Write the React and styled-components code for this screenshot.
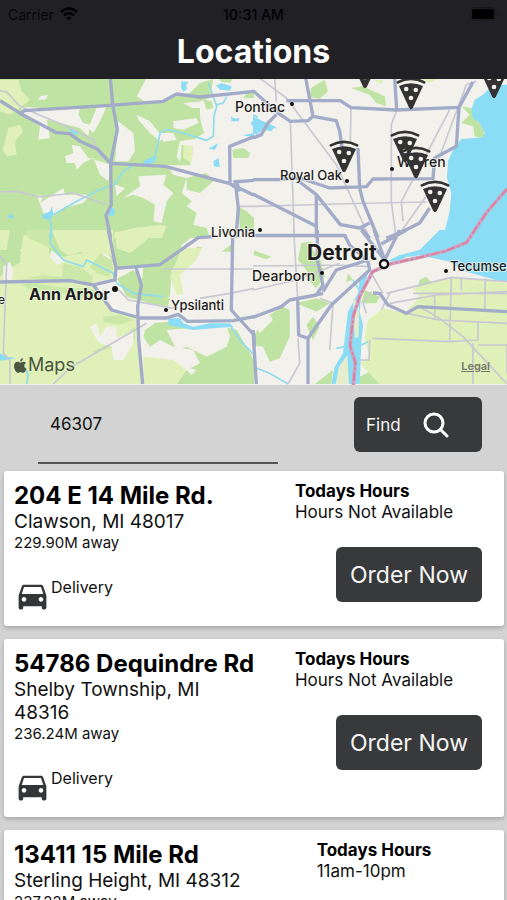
import styled, { createGlobalStyle } from 'styled-components';
import { MdDirectionsCar } from 'react-icons/md';

// The map is drawn from four tiles; each tile keeps its own coordinates.
const tiles = [
  {
    at: 'translate(0 -3)',
    forest: [
      'M0 0H640L630 60L600 70L600 120L612 165L585 182L540 190L530 235L545 262L500 262L520 290L560 300L545 345L575 370L560 385L590 405L580 440L620 450L630 480H0Z',
      'M560 300L620 285L640 310L600 345L560 335ZM545 200L575 205L570 262L540 262Z',
      'M610 65L635 70L640 90L620 95ZM697 215L730 210L750 225L745 240L700 240ZM655 0H700L690 14L665 12ZM730 60H762V45L740 45Z',
      'M715 385L740 400L762 420V470L720 455Z'
    ],
    field: [
      'M0 5H55L65 40L90 65L60 90L30 110L0 100ZM25 150L60 140L70 160L45 190L50 230L20 235L8 215Z',
      'M345 465L400 450L480 440L500 445L485 480H340ZM550 200L580 205L575 255L550 240Z'
    ],
    land: [
      'M62 88L90 88L180 95L240 90L235 110L250 135L270 140L265 175L240 150L180 135L140 125L150 180L115 185L120 145L80 120Z',
      'M120 55L145 50L135 65L115 65ZM195 235L220 225L215 200L240 205L265 240L300 250L330 260L325 310L300 290L280 240L250 255L230 275L225 255L200 255ZM290 90L320 85L300 130L280 165L265 150ZM355 130L400 165L405 220L385 250L345 250ZM410 110L450 130L490 180L480 190L450 165L415 125Z',
      'M410 55L440 0H650L600 15L570 45L530 55L495 70L440 75ZM520 130L590 120L595 135L550 155L520 150ZM480 165L520 165L530 185L490 192ZM550 75L610 70L600 90L575 90ZM415 295L500 290L490 320L520 345L500 370L485 435L460 430L465 380L430 360L400 350L370 360L420 325ZM345 320L375 330L350 355ZM110 350L130 355L120 375L190 330L195 350L270 350L250 375L190 390L160 415L130 405Z'
    ],
    water: [
      'M545 10L565 12L558 22L562 32L550 42L543 28ZM648 22L665 16L695 25L690 38L660 35ZM435 245L470 235L465 250L450 260L432 257ZM692 115L705 122L718 120L716 130L695 130ZM640 250L655 240L660 268L642 265ZM625 212L655 195L645 215ZM330 385L346 395L340 415L327 415ZM125 412L150 400L156 385L160 410L150 425L130 422ZM22 418L32 406L45 422ZM205 148L235 165L230 172L210 160ZM728 172L762 165V178ZM752 135L762 125V150Z'
    ],
    streams: [
      'M430 255L465 235L480 165L500 155L550 165L620 187L640 175L642 115L650 85L625 15M160 410L230 370L300 335L345 318L370 280L400 262M150 425L155 450L148 480M650 80L670 75L680 55'
    ],
    minor: [
      'M0 38L20 42L60 85L120 112L200 145L280 185L300 230L330 255M0 342L50 340L120 357L220 345L320 380M720 385H762'
    ],
    roads: [
      'M331 0L338 80L352 155L332 255L334 380L318 412L332 480M0 68L62 107L170 164L210 167L240 190L292 213L332 256L495 265L690 317L762 352M62 107L72 98L330 82L490 70L530 48L600 57L762 40M690 317L689 205L762 176M690 317L708 330L715 390L708 480M700 312L762 307M710 313L720 340'
    ]
  },
  {
    at: 'translate(759 -3)',
    forest: [
      'M175 30L215 5L225 40L200 62L170 58ZM295 30L330 25L395 55L400 85L370 75L350 50ZM625 85L655 90L660 110L690 150L695 182L665 175L660 145L625 135L650 110Z'
    ],
    field: ['M500 0H560L530 14ZM360 5H390L385 18Z'],
    land: [],
    water: [
      'M762 20H720L690 50L665 65L655 95L660 120L680 135L695 165L690 178L625 183L600 215L585 250L582 300L595 345L590 400L570 480H762Z',
      'M0 115L30 130L65 145L55 160L30 155L10 170L0 165Z'
    ],
    streams: ['M0 110L15 118M40 140L68 150'],
    minor: [
      'M20 0L100 60L250 260L350 480M294 90L292 190M112 130L124 480M0 385L250 378L520 372M590 95L530 210L445 370L450 430M670 10L640 20L555 250M65 0L70 70M432 94L415 140L415 370L428 470M445 460L530 340'
    ],
    roads: [
      'M158 0L180 115L165 128L112 130L75 105L0 38M100 68H262L294 89L430 96L618 88L660 12M425 0L431 94M180 115L250 128L260 160L268 215M315 210L320 330M0 305H80L140 300L230 330L340 326L360 303L540 302L545 240L610 205L618 88M140 312L190 350L262 440L320 450L350 435M190 350V480M0 348L190 445M320 330L330 370L375 480M530 390L500 435L440 465L400 480M70 110L45 135L25 170L0 180M0 473H280M325 450L350 480'
    ]
  },
  {
    at: 'translate(0 453)',
    forest: [
      'M0 0H600L545 45L535 100L515 120L510 200L475 205L470 235L420 230L430 110L345 115L330 80L300 55L290 90L270 110L190 80L150 75L80 45L60 60L75 90L40 110L0 140ZM65 165L100 155L160 170L280 175L300 205L250 200L210 190L100 185Z',
      'M345 150L400 120L470 190L510 205L500 245L430 240L370 205ZM440 280L520 275L590 300L670 290L710 300L762 390V462H530L560 420L600 400L580 360L520 350L480 330L450 350L430 320ZM275 365L350 330L410 290L405 330L350 350L290 365ZM310 260L360 255L400 270L360 285L310 275Z',
      'M665 65L730 15L755 20L740 90L710 100L700 65ZM590 50L625 55L620 75L590 65ZM530 5L545 0V25Z'
    ],
    field: [
      'M0 140L40 110L75 90L190 80L300 60L345 115V165L410 270V462H0Z',
      'M70 15L140 20L150 75L190 110L185 140L75 145L60 90ZM155 0H340L340 80L300 65L280 85L240 65L210 80L180 60ZM345 5H460L440 30L390 70L350 55ZM545 55L610 55L570 120L560 190L530 195L510 140Z',
      'M400 300L420 350L425 462H390ZM430 380L520 390L560 420L530 462H430ZM0 0H30L20 60L0 60Z'
    ],
    // woods standing inside the fields west of Ann Arbor
    woods: [
      'M65 165L100 155L160 170L280 178L300 205L250 200L210 190L100 185ZM75 145L130 135L185 142L190 100L240 110L280 140L275 160L190 150ZM270 110L300 70L335 90L340 115L325 140L290 130ZM310 260L360 255L400 270L360 285L310 275ZM275 365L350 330L405 290L405 325L350 350L290 365ZM80 0H150L165 60L120 40L85 25Z'
    ],
    land: [
      'M285 155L350 145L380 200L470 225L530 235L620 200L690 180L762 190V270L690 265L560 270L420 262L330 240ZM610 45L660 60L690 95L670 140L610 190L550 195L540 135L590 90ZM705 0H762V190L690 170ZM270 290L290 280L300 320L320 290L350 290L350 325L400 300L400 340L370 390L340 390L335 350L300 340L285 320ZM500 300L680 285L690 320L680 350L620 380L560 350L530 360ZM155 60L195 95L170 105L150 80ZM10 110L30 95L40 125L35 150L10 150ZM550 410L590 420L575 435ZM430 265L465 280L435 300Z'
    ],
    water: ['M505 265L540 265L550 280L580 290L630 280L690 280L700 290L640 295L580 300L530 290L505 285ZM0 370L20 380L50 385L0 392Z'],
    streams: ['M155 0L150 40L190 90L250 110L260 90L340 130L350 160L400 190L490 200M690 285L720 330L762 375M65 395L85 435L80 462'],
    minor: ['M0 80L20 100L10 370L30 390V462M490 117H762M355 178L385 210L520 235M600 205L690 190L762 175M160 462L215 410L440 280'],
    roads: [
      'M325 0L348 115L345 150L280 165L210 152L0 156M348 115L480 104L595 23L640 20M408 113L424 165L413 230L416 330L428 462M280 165L335 240L420 264H500L535 253L563 274L700 272L762 260M698 20L694 240L762 315V350'
    ]
  },
  {
    at: 'translate(759 453)',
    forest: [
      'M0 60L55 80L40 88L0 75ZM145 38L175 35L180 60L205 95L215 140L190 175L170 155L160 120L135 90ZM40 260L90 230L110 240L110 320L80 385L50 395L30 350L0 345V320L20 290ZM130 220L190 205L230 220L190 245ZM160 285L180 260L200 290L180 330ZM335 180L380 200L370 220L325 220ZM500 150L520 140L560 190L490 185ZM185 462L240 420L235 462ZM320 440L360 420L380 462H320ZM285 130L300 150L280 155Z'
    ],
    field: [
      'M345 270L390 235L455 250L500 200L480 175L600 140L762 160V462H380L320 400L350 380L335 325ZM300 200L318 240L315 320L300 290Z'
    ],
    land: ['M40 240L60 270L20 310L15 300Z'],
    water: [
      'M560 0H762V155L730 150L640 125L590 95L500 75L430 92L400 95L440 75L500 60Z',
      'M345 130L325 195L320 245L330 285L325 340L320 462H235L245 410L270 370L285 245L315 190L320 150Z'
    ],
    // long islands in the Detroit river
    islands: ['M300 200L318 230L317 320L306 325L302 270ZM283 375L288 462H248L258 410ZM440 92L460 80L500 78L490 92Z'],
    streams: ['M325 190L300 150M0 410L50 430L105 462M325 345L345 335M250 355L275 350'],
    minor: [
      'M122 0L134 205M0 108L250 105L350 110M0 180L130 150L260 100M400 190L595 142L762 155M480 190H762M410 220L550 195L762 185M595 142L590 335M360 325L590 335L675 330V275M350 330L348 390H320M460 250L560 270L762 280M545 190V270M625 142V180M697 145L695 245M675 345H762V430M660 340V462M240 225L230 360M135 325L140 400L105 462M200 205L240 220M355 130L390 190M340 250L330 220L355 185M385 240L410 190',
      'M500 230L560 265L630 320L762 462'
    ],
    roads: [
      'M0 16H275L290 45L345 95L350 120L235 225L165 325V462M193 0V90L210 165L190 195L110 210L85 230L0 262M134 210L137 315L165 325M325 0L395 90M363 0L395 90L440 0M385 42L460 0M210 190L190 195M360 189L380 190L405 225L460 250L495 230L762 245M0 300L10 462M210 185L250 120L345 90'
    ]
  }
];

const layers = [
  { name: 'forest', fill: '#bfe3a2' },
  { name: 'field', fill: '#dff0b8' },
  { name: 'woods', fill: '#cbe8a8' },
  { name: 'land', fill: '#f3f1ec' },
  { name: 'water', fill: '#8bdcf5' },
  { name: 'islands', fill: '#e6edcf' },
  { name: 'streams', stroke: '#8fdcec', width: 5 },
  { name: 'minor', stroke: '#c8c8d2', width: 5 },
  { name: 'roads', stroke: '#a2acc8', width: 10 }
];

const border =
  'M1521 330L1460 400L1400 490L1340 515L1260 535L1170 555L1118 578L1080 650L1060 710L1050 800L1066 850L1060 918';

const towns = [
  { name: 'Pontiac', x: 235, y: 33, size: 14, weight: 500, dot: [292, 25] },
  { name: 'Royal Oak', x: 280, y: 101, size: 13, weight: 500, dot: [347, 102] },
  { name: 'Warren', x: 397, y: 88, size: 14, weight: 500, dot: [392, 90] },
  { name: 'Livonia', x: 211, y: 158, size: 13, weight: 500, dot: [260, 151] },
  { name: 'Detroit', x: 307, y: 181, size: 21, weight: 700 },
  { name: 'Dearborn', x: 252, y: 202, size: 14, weight: 500, dot: [322, 194] },
  { name: 'Tecumse', x: 450, y: 192, size: 13, weight: 500, dot: [446, 192] },
  { name: 'Ann Arbor', x: 29, y: 221, size: 16, weight: 700, dot: [115, 210], big: true },
  { name: 'Ypsilanti', x: 171, y: 231, size: 13, weight: 500, dot: [166, 231] },
  { name: 'e', x: -2, y: 225, size: 12, weight: 400 }
];

const pins = [
  [365, -22],
  [411, -1],
  [494, -12],
  [344, 62],
  [405, 52],
  [416, 68],
  [435, 102]
];

const stores = [
  { street: '204 E 14 Mile Rd.', city: 'Clawson, MI 48017', distance: '229.90M', hours: 'Hours Not Available' },
  { street: '54786 Dequindre Rd', city: 'Shelby Township, MI 48316', distance: '236.24M', hours: 'Hours Not Available' },
  { street: '13411 15 Mile Rd', city: 'Sterling Height, MI 48312', distance: '237.22M', hours: '11am-10pm' }
];

function PizzaPin({ x, y }) {
  return (
    <g transform={`translate(${x} ${y})`}>
      <path d='M-13.2 4.4Q0 -2.6 13.2 4.4' fill='none' stroke='#333' strokeWidth='2.6' strokeLinecap='round' />
      <path d='M-12 8Q0 2.6 12 8L2 29.600Q0 33 -2 29.600Z' fill='#333' />
      <circle cx='-4.8' cy='11' r='2.3' fill='#f3f1ec' />
      <circle cx='4.8' cy='12' r='2.3' fill='#f3f1ec' />
      <circle cx='0' cy='20' r='2.3' fill='#f3f1ec' />
    </g>
  );
}

function StoreMap() {
  return (
    <MapArea>
      <svg viewBox='0 0 507 306' role='img' aria-label='Map of store locations'>
        <rect width='507' height='306' fill='#f3f1ec' />
        <g transform='scale(0.33333)' strokeLinejoin='round'>
          {layers.map(layer => (
            <g
              key={layer.name}
              fill={layer.fill || 'none'}
              stroke={layer.stroke}
              strokeWidth={layer.width}>
              {tiles.map(tile => (
                <g key={tile.at} transform={tile.at}>
                  {(tile[layer.name] || []).map(d => (
                    <path key={d} d={d} />
                  ))}
                </g>
              ))}
            </g>
          ))}
          <path d={border} fill='none' stroke='#c9a5c9' strokeWidth='11' />
          <path d={border} fill='none' stroke='#e5798f' strokeWidth='5' strokeDasharray='26 7 8 7' />
        </g>
        {towns.map(town => (
          <g key={town.name}>
            {town.dot && <circle cx={town.dot[0]} cy={town.dot[1]} r={town.big ? 3 : 2} fill='#111' />}
            <TownName x={town.x} y={town.y} fontSize={town.size} fontWeight={town.weight}>
              {town.name}
            </TownName>
          </g>
        ))}
        <circle cx='384' cy='185' r='4' fill='#fff' stroke='#111' strokeWidth='2.400' />
        {pins.map(([x, y]) => (
          <PizzaPin key={`${x} ${y}`} x={x} y={y} />
        ))}
      </svg>
      <MapBrand>
        <svg width='13' height='15' viewBox='0 0 26 30' fill='currentColor' aria-hidden='true'>
          <path d='M18 0C18.300 3.500 15.500 7 12.300 7C12 3.700 15 .4 18 0ZM24 10C18.500 13 19.600 19.500 25 21.500C23.500 25.500 21 29.500 18.300 29.500C16.300 29.500 15.700 28.300 13.300 28.300C10.800 28.300 10 29.500 8.200 29.500C4.500 29.500 0 22 0 16.300C0 10.600 3.600 7.700 7.200 7.700C9.600 7.700 11.500 9.200 13 9.200C14.400 9.200 16.600 7.500 19.400 7.600C20.500 7.700 22.700 8.200 24 10Z' />
        </svg>
        Maps
      </MapBrand>
      <Legal href='#legal'>Legal</Legal>
    </MapArea>
  );
}

function StoreCard({ store }) {
  return (
    <Card>
      <div>
        <Street>{store.street}</Street>
        <City>{store.city}</City>
        <Distance>{store.distance} away</Distance>
        <Delivery>
          <MdDirectionsCar size={37} color='#333537' />
          <span>Delivery</span>
        </Delivery>
      </div>
      <Side>
        <Hours>
          <strong>Todays Hours</strong>
          <span>{store.hours}</span>
        </Hours>
        <OrderButton>Order Now</OrderButton>
      </Side>
    </Card>
  );
}

function App() {
  return (
    <Page>
      <GlobalStyle />
      <Header>
        <StatusBar>
          <Carrier>
            Carrier
            <svg width='18' height='14' viewBox='0 0 18 14' fill='none' stroke='#000' strokeWidth='2.600' aria-hidden='true'>
              <path d='M1 5Q9 -2 17 5M4 8.300Q9 4 14 8.300' />
              <path d='M6.500 10.800Q9 8.600 11.500 10.800L9 13.500Z' fill='#000' stroke='none' />
            </svg>
          </Carrier>
          <Time>10:31 AM</Time>
          <svg width='29' height='14' viewBox='0 0 29 14' aria-hidden='true'>
            <rect x='.5' y='.5' width='25' height='13' rx='4' fill='none' stroke='#18171b' />
            <rect x='2' y='2' width='22' height='10' rx='2' fill='#000' />
            <path d='M27 4.500Q29 7 27 9.500Z' fill='#18171b' />
          </svg>
        </StatusBar>
        <h1>Locations</h1>
      </Header>
      <StoreMap />
      <Search onSubmit={e => e.preventDefault()}>
        <ZipInput aria-label='Zip code' defaultValue='46307' />
        <FindButton>
          Find
          <svg width='26' height='26' viewBox='0 0 26 26' fill='none' stroke='#fff' strokeWidth='3' aria-hidden='true'>
            <circle cx='11' cy='11' r='9' />
            <path d='M17.500 17.500L24 24' strokeLinecap='round' />
          </svg>
        </FindButton>
      </Search>
      <List>
        {stores.map(store => (
          <StoreCard key={store.street} store={store} />
        ))}
      </List>
    </Page>
  );
}

const GlobalStyle = createGlobalStyle`
  * {
    box-sizing: border-box;
  }

  body {
    margin: 0;
    background: #d3d3d3;
    color: #111;
    font-family: Inter, 'Liberation Sans', sans-serif;
  }

  button,
  input {
    font-family: inherit;
  }
`;

const Page = styled.div`
  height: 100vh;
  overflow: hidden;
`;

const Header = styled.header`
  padding: 4px 8px 3px;
  background: #212025;

  h1 {
    margin: 4px 0 0;
    color: white;
    font-size: 32px;
    font-weight: 700;
    line-height: 48px;
    text-align: center;
  }
`;

const StatusBar = styled.div`
  display: grid;
  grid-template-columns: 1fr auto 1fr;
  align-items: center;
  height: 20px;
  color: #050506;
  font-size: 14px;

  > svg {
    justify-self: end;
  }
`;

const Carrier = styled.div`
  display: flex;
  align-items: center;
  gap: 6px;
`;

const Time = styled.div`
  font-weight: 600;
`;

const MapArea = styled.section`
  position: relative;

  > svg {
    display: block;
    width: 100%;
    height: auto;
  }
`;

const TownName = styled.text`
  fill: #1c1c1c;
  stroke: #f6f5f0;
  stroke-width: 2px;
  stroke-opacity: 0.7;
  paint-order: stroke;
`;

const MapBrand = styled.div`
  position: absolute;
  bottom: 8px;
  left: 14px;
  display: flex;
  align-items: center;
  gap: 1px;
  color: #4b5541;
  font-size: 18px;
  line-height: 24px;
`;

const Legal = styled.a`
  position: absolute;
  right: 17px;
  bottom: 11px;
  color: #75796b;
  font-size: 11px;
  font-weight: 600;
  line-height: 16px;
`;

const Search = styled.form`
  display: flex;
  justify-content: space-between;
  align-items: flex-start;
  padding: 0 25px 7px 38px;
`;

const ZipInput = styled.input`
  width: 54%;
  min-width: 0;
  height: 79px;
  padding: 0 12px;
  border: none;
  border-bottom: 2px solid #555;
  border-radius: 0;
  outline: none;
  background: transparent;
  color: #111;
  font-size: 17px;
`;

const Button = styled.button`
  height: 55px;
  border: none;
  border-radius: 6px;
  background: #38393b;
  color: #f4f4f4;
  cursor: pointer;
`;

const FindButton = styled(Button)`
  display: flex;
  align-items: center;
  gap: 22px;
  width: 128px;
  margin-top: 12px;
  padding: 0 12px;
  font-size: 17px;
`;

const OrderButton = styled(Button)`
  align-self: flex-end;
  width: 146px;
  margin: 24px 12px 0 0;
  padding: 0;
  font-size: 23px;
`;

const List = styled.main`
  display: grid;
  gap: 13px;
  padding: 0 3px 13px 4px;
`;

const Card = styled.article`
  display: grid;
  grid-template-columns: 1fr 1fr;
  padding: 10px 10px 12px;
  border-radius: 3px;
  background: white;
  box-shadow: 0 2px 4px rgba(0, 0, 0, 0.22);
`;

const Street = styled.h2`
  margin: 0;
  color: #000;
  font-size: 24px;
  font-weight: 700;
  line-height: 29px;
  white-space: nowrap;
`;

const City = styled.div`
  font-size: 19px;
  line-height: 23px;
`;

const Distance = styled.div`
  font-size: 15px;
  line-height: 20px;
`;

const Delivery = styled.div`
  display: flex;
  margin-top: 24px;
  font-size: 16px;
  line-height: 20px;
`;

const Side = styled.div`
  display: flex;
  flex-direction: column;
  align-items: center;
`;

const Hours = styled.div`
  display: flex;
  flex-direction: column;
  font-size: 17px;
  line-height: 21px;

  strong {
    color: #000;
  }
`;

export default App;
